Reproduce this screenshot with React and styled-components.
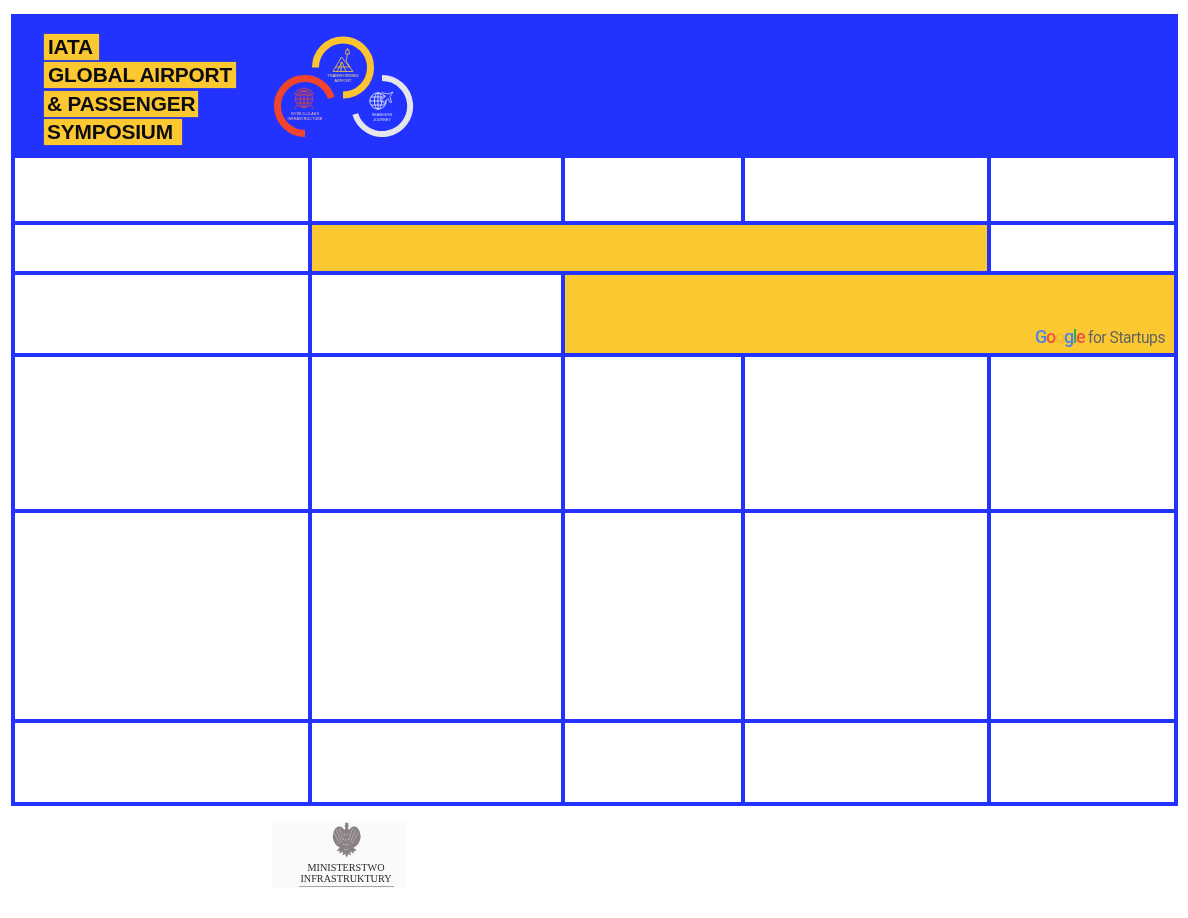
import React from "react";
import styled, { createGlobalStyle } from "styled-components";

const BLUE = "#2233ff";
const YELLOW = "#fcc832";

const Global = createGlobalStyle`
  html, body { margin: 0; padding: 0; background: #fff; }
  body { font-family: "Liberation Sans", Arial, sans-serif; }
`;

const Page = styled.div`
  width: 1188px;
  height: 918px;
  overflow: hidden;
  padding: 14px 0 0 11px;
  box-sizing: border-box;
`;

const Table = styled.section`
  width: 1167px;
  background: ${BLUE};
`;

const Header = styled.header`
  height: 144px;
  display: flex;
  align-items: flex-start;
  gap: 35px;
  padding: 20px 0 0 33px;
  box-sizing: border-box;
`;

const Title = styled.div`
  width: 193px;
  display: flex;
  flex-direction: column;
  align-items: flex-start;
  gap: 2.9px;
`;

const TitleLine = styled.span`
  width: ${(p) => p.$width}px;
  height: 25.6px;
  box-sizing: border-box;
  display: flex;
  align-items: center;
  padding-left: ${(p) => p.$pad}px;
  background: ${YELLOW};
  box-shadow: 0 0 0 0.5px rgba(120, 110, 110, 0.55);
  color: #0b0b10;
  font-family: "Liberation Sans", Arial, sans-serif;
  font-weight: 700;
  font-size: 20.9px;
  letter-spacing: -0.2px;
  white-space: nowrap;
  filter: blur(0.3px);
`;

const Rings = styled.svg`
  width: 142px;
  height: 105px;
  margin-top: 1px;
  flex: none;
  filter: blur(0.35px);
`;

const RingCaption = styled.text`
  font-family: "Liberation Sans", Arial, sans-serif;
  font-size: 3.8px;
  text-anchor: middle;
  fill: ${(p) => p.$color};
`;

const Grid = styled.div`
  display: grid;
  grid-template-columns: 293px 249px 176px 242px 183px;
  grid-template-rows: 63px 46px 78px 152px 206px 79px;
  gap: 4px;
  padding: 0 4px 4px;
`;

const Cell = styled.div`
  grid-column: span ${(p) => p.$span || 1};
  background: ${(p) => (p.$accent ? YELLOW : "#fff")};
  display: flex;
  align-items: flex-end;
  justify-content: flex-end;
`;

const GoogleMark = styled.div`
  display: flex;
  align-items: baseline;
  gap: 3.5px;
  padding: 0 9px 5px 0;
  line-height: 20px;
  filter: blur(0.3px);
`;

const GoogleWord = styled.span`
  font-family: Roboto, "Open Sans", sans-serif;
  font-size: 18px;
  font-weight: 500;
  letter-spacing: -1.3px;
`;

const GoogleLetter = styled.span`
  color: ${(p) => p.$color};
`;

const Startups = styled.span`
  color: #646464;
  font-family: Roboto, sans-serif;
  font-size: 15.6px;
  letter-spacing: -0.45px;
`;

const Ministry = styled.figure`
  width: 134px;
  height: 67px;
  margin: 15px 0 0 261px;
  background: #fbfafa;
  display: flex;
  flex-direction: column;
  align-items: center;
  box-sizing: border-box;
  padding: 1px 0 0 14px;
`;

const Eagle = styled.svg`
  width: 30px;
  height: 36px;
  flex: none;
  filter: blur(0.4px);
`;

const MinistryName = styled.figcaption`
  width: 95px;
  margin-top: 4px;
  padding-bottom: 2px;
  border-bottom: 1px solid #a5a3a3;
  font-family: "Liberation Serif", "Times New Roman", serif;
  font-size: 10.2px;
  line-height: 11px;
  text-align: center;
  color: #2c2a2a;
  white-space: nowrap;
  filter: blur(0.2px);
`;

const titleLines = [
  { text: "IATA", width: 55, pad: 4 },
  { text: "GLOBAL AIRPORT", width: 192, pad: 4 },
  { text: "& PASSENGER", width: 154, pad: 3 },
  { text: "SYMPOSIUM", width: 138, pad: 3 },
];

const googleLetters = [
  ["G", "#4a86e8"],
  ["o", "#e8553f"],
  ["o", "#f2b92c"],
  ["g", "#4a86e8"],
  ["l", "#3ea85a"],
  ["e", "#e8553f"],
];

const rows = [
  [{}, {}, {}, {}, {}],
  [{}, { span: 3, accent: true }, {}],
  [{}, {}, { span: 3, accent: true, sponsor: true }],
  [{}, {}, {}, {}, {}],
  [{}, {}, {}, {}, {}],
  [{}, {}, {}, {}, {}],
];

function RingsLogo() {
  return (
    <Rings viewBox="272 35 142 105" aria-label="Symposium themes">
      <path d="M315.5 67.5A27.5 27.5 0 1 1 343 95" fill="none" stroke="#fcc42e" strokeWidth="7" />
      <path d="M305 133.5A27.5 27.5 0 1 1 331.3 98" fill="none" stroke="#f0452c" strokeWidth="7" />
      <path d="M382 78A28 28 0 1 1 355.3 114" fill="none" stroke="#e6e6ea" strokeWidth="6" />

      <g fill="none" stroke="#fcc42e" strokeWidth="0.8">
        <path d="M333 71.5L341.5 57L353 71.5ZM337 71.5L342 62L346 71.5M341 71.5V62M335.5 67H350.5" />
        <path d="M346 62L347.5 54M345.5 54H349.5L349 50H346ZM347.5 50V48M347 62L350 67" />
      </g>
      <RingCaption $color="#fcd77a" x="343" y="77">TRANSFORMING</RingCaption>
      <RingCaption $color="#fcd77a" x="343" y="81.5">AIRPORT</RingCaption>

      <g fill="none" stroke="#f0452c" strokeWidth="0.85">
        <circle cx="304" cy="99" r="8.5" />
        <ellipse cx="304" cy="99" rx="4" ry="8.5" />
        <path d="M295.5 99H312.5M296.5 95H311.5M296.5 103H311.5M304 90.5V107.5" />
        <path d="M294.5 95L297 90.5L304 88L311 90.5L313.5 95M297 105L295 108.5M311 105L313 108.5" />
      </g>
      <RingCaption $color="#f7b9ae" x="305" y="115">WORLD-CLASS</RingCaption>
      <RingCaption $color="#f7b9ae" x="305" y="119.5">INFRASTRUCTURE</RingCaption>

      <g fill="none" stroke="#f2f2f6" strokeWidth="0.8">
        <circle cx="378" cy="101" r="8.2" />
        <ellipse cx="378" cy="101" rx="3.6" ry="8.2" />
        <path d="M369.8 101H386.2M371 97H385M371 105H385M378 92.8V109.2" />
      </g>
      <path d="M393 92L388 94L382 92.5L381 93.5L385.5 96L382.5 99L380.5 98.5L380 99.5L383 101L384.5 104L385.5 103.5L385 101.5L388 98.5L390.5 103L391.5 102L390 96.5Z" fill={BLUE} stroke="#f2f2f6" strokeWidth="0.7" />
      <RingCaption $color="#d9dbf4" x="382" y="116">SEAMLESS</RingCaption>
      <RingCaption $color="#d9dbf4" x="382" y="120.5">JOURNEY</RingCaption>
    </Rings>
  );
}

function EagleMark() {
  return (
    <Eagle viewBox="0 0 30 36" aria-label="Godlo">
      <path
        d="M15 0l1.400 1.200 1.200-.4-.4 2 .6 1.600-1 1.200 1.200 2.400 1.800-2.200 2.200-1.400 2.400.2 2.400 1.600 1.600 2.600.9 3.200.4 3.400-1 3.600-1.600 3-2.200 2.200-2.400 1.200 1.600 1.600 1.800 2-2-.2-1.400.8.6 1.800-1.800-.6-1.600-1.200-.4 1.800 1 2.200-2-.8-1-1.200-.6 2.200-1 1.800-1-1.800-.6-2.200-1 1.200-2 .8 1-2.200-.4-1.800-1.600 1.200-1.800.6.6-1.800-1.400-.8-2 .2 1.800-2 1.600-1.600-2.400-1.200-2.200-2.200-1.600-3-1-3.600.4-3.400.9-3.200 1.600-2.600 2.400-1.600 2.400-.2 2.200 1.400 1.800 2.200 1.200-2.400-1-1.200.6-1.600-.4-2 1.200.4z"
        fill="#8a8282"
      />
      <g fill="none" stroke="#d8d3d3" strokeWidth="0.7" strokeDasharray="1.6 0.8">
        <path d="M3 11l6 11M5.500 8l5 12M8.500 6.500l3.500 11M27 11l-6 11M24.500 8l-5 12M21.500 6.500l-3.500 11" />
        <path d="M12.500 12c1.600 1.400 3.400 1.400 5 0M12 17c2 1.600 4 1.600 6 0M12 22c2 1.400 4 1.400 6 0M13 27c1.400 1 2.600 1 4 0" />
      </g>
    </Eagle>
  );
}

export default function App() {
  return (
    <Page>
      <Global />
      <Table>
        <Header>
          <Title>
            {titleLines.map((line) => (
              <TitleLine key={line.text} $width={line.width} $pad={line.pad}>
                {line.text}
              </TitleLine>
            ))}
          </Title>
          <RingsLogo />
        </Header>
        <Grid>
          {rows.map((row, r) =>
            row.map((cell, c) => (
              <Cell key={`${r}-${c}`} $span={cell.span} $accent={cell.accent}>
                {cell.sponsor && (
                  <GoogleMark>
                    <GoogleWord>
                      {googleLetters.map(([letter, color], i) => (
                        <GoogleLetter key={i} $color={color}>
                          {letter}
                        </GoogleLetter>
                      ))}
                    </GoogleWord>
                    <Startups>for Startups</Startups>
                  </GoogleMark>
                )}
              </Cell>
            ))
          )}
        </Grid>
      </Table>
      <Ministry>
        <EagleMark />
        <MinistryName>
          MINISTERSTWO
          <br />
          INFRASTRUKTURY
        </MinistryName>
      </Ministry>
    </Page>
  );
}
